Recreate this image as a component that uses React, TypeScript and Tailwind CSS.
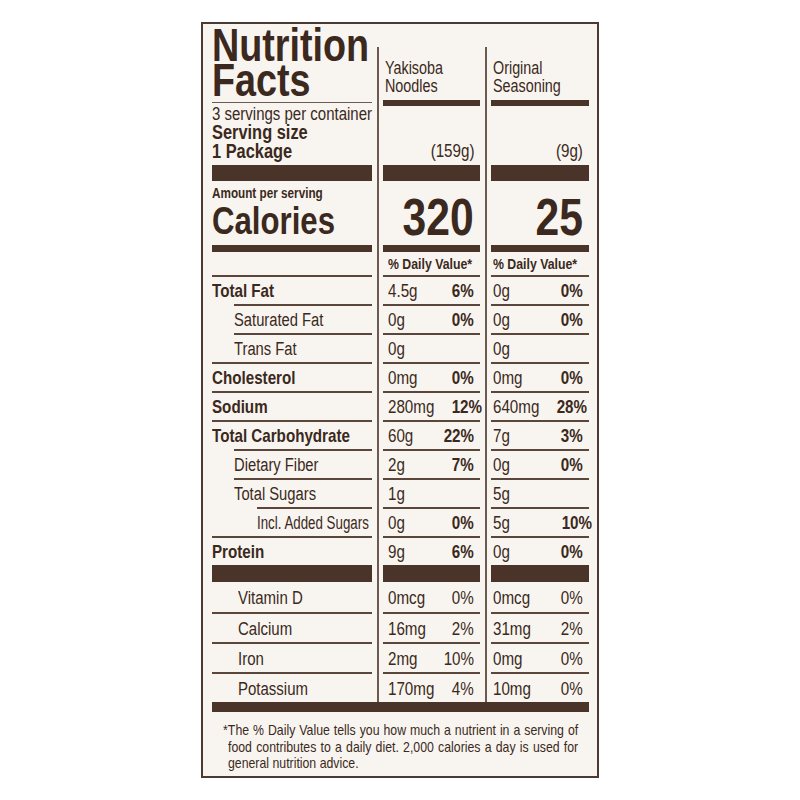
import React from "react";

type Row = {
  label: string;
  bold?: boolean;
  indent: string;
  a: [string, string];
  b: [string, string];
  ashift?: string;
  bshift?: string;
};

const rows: Row[] = [
  { label: "Total Fat", bold: true, indent: "ml-0", a: ["4.5g", "6%"], b: ["0g", "0%"] },
  { label: "Saturated Fat", indent: "ml-[22px]", a: ["0g", "0%"], b: ["0g", "0%"] },
  { label: "Trans Fat", indent: "ml-[22px]", a: ["0g", ""], b: ["0g", ""] },
  { label: "Cholesterol", bold: true, indent: "ml-0", a: ["0mg", "0%"], b: ["0mg", "0%"] },
  { label: "Sodium", bold: true, indent: "ml-0", a: ["280mg", "12%"], b: ["640mg", "28%"], ashift: "mr-[-7px]" },
  { label: "Total Carbohydrate", bold: true, indent: "ml-0", a: ["60g", "22%"], b: ["7g", "3%"] },
  { label: "Dietary Fiber", indent: "ml-[22px]", a: ["2g", "7%"], b: ["0g", "0%"] },
  { label: "Total Sugars", indent: "ml-[22px]", a: ["1g", ""], b: ["5g", ""] },
  { label: "Incl. Added Sugars", indent: "ml-[45px]", a: ["0g", "0%"], b: ["5g", "10%"], bshift: "mr-[-9px]" },
  { label: "Protein", bold: true, indent: "ml-0", a: ["9g", "6%"], b: ["0g", "0%"] },
];

const vit = [
  { label: "Vitamin D", a: ["0mcg", "0%"], b: ["0mcg", "0%"] },
  { label: "Calcium", a: ["16mg", "2%"], b: ["31mg", "2%"] },
  { label: "Iron", a: ["2mg", "10%"], b: ["0mg", "0%"] },
  { label: "Potassium", a: ["170mg", "4%"], b: ["10mg", "0%"] },
];

function L({
  children,
  className = "",
  sx = "scale-x-[0.82]",
}: {
  children: React.ReactNode;
  className?: string;
  sx?: string;
}) {
  return <span className={`inline-block whitespace-nowrap origin-left ${sx} ${className}`}>{children}</span>;
}
function R({ children, className = "" }: { children: React.ReactNode; className?: string }) {
  return <span className={`inline-block whitespace-nowrap origin-right scale-x-[0.82] ${className}`}>{children}</span>;
}

function Bar({ h }: { h: string }) {
  return <div className={`${h} w-full bg-[#4a3329]`} />;
}

function ValueCol({
  head,
  weight,
  cal,
  second,
  pad,
}: {
  head: [string, string];
  weight: string;
  cal: string;
  second: boolean;
  pad: string;
}) {
  return (
    <div className="flex flex-col w-full">
      <div className="h-[53px] pt-[12px] pl-[2px] text-[17.5px] leading-[18px]">
        <div><L>{head[0]}</L></div>
        <div><L>{head[1]}</L></div>
      </div>
      <Bar h="h-[6px]" />
      <div className="h-[59px] flex items-end justify-end pr-[6px] pb-[4px] text-[18.5px] leading-[20px]">
        <R>{weight}</R>
      </div>
      <Bar h="h-[16px]" />
      <div className="h-[64px] pt-[10px] pr-[6px] flex justify-end text-[52px] leading-[52px] font-bold">
        <R>{cal}</R>
      </div>
      <Bar h="h-[7px]" />
      <div className={`h-[23px] text-[15px] leading-[23px] font-bold ${pad}`}>
        <L>% Daily Value*</L>
      </div>
      {rows.map((r, i) => {
        const [v, p] = second ? r.b : r.a;
        const shift = second ? r.bshift ?? "" : r.ashift ?? "";
        return (
          <div key={i} className={`h-[29px] border-t-2 border-[#5a463b] flex items-center justify-between pt-[1px] pr-[6px] text-[18.5px] ${pad}`}>
            <L>{v}</L>
            <R className={`font-bold ${shift}`}>{p}</R>
          </div>
        );
      })}
      <Bar h="h-[17px]" />
      {vit.map((v, i) => {
        const [a, b] = second ? v.b : v.a;
        return (
          <div key={i} className={`h-[30px] ${i === 0 ? "" : "border-t-2 border-[#5a463b]"} flex items-center justify-between pt-[1px] pr-[6px] text-[18.5px] ${pad}`}>
            <L>{a}</L>
            <R>{b}</R>
          </div>
        );
      })}
    </div>
  );
}

export default function App() {
  return (
    <div className="min-h-screen bg-white pt-[22px]">
      <div className="mx-auto w-[398px] h-[756px] border-2 border-[#4a3a32] bg-[#f8f5f0] pl-[9px] pr-[8px] text-[#3b2920] [font-family:'Liberation_Sans',Arial,sans-serif]">
        <div className="flex items-start">
          {/* Left column */}
          <div className="w-[160px] flex flex-col">
            <div className="h-[79px] border-b-[1px] border-[#6a5a50] pt-[4px] text-[46px] leading-[35px] font-bold">
              <div><L>Nutrition</L></div>
              <div><L>Facts</L></div>
            </div>
            <div className="h-[62px] pt-[1px] leading-[19px]">
              <div className="text-[18.3px]"><L>3 servings per container</L></div>
              <div className="font-bold text-[20px]"><L>Serving size</L></div>
              <div className="font-bold text-[20px]"><L>1 Package</L></div>
            </div>
            <Bar h="h-[16px]" />
            <div className="h-[64px]">
              <div className="pt-[2px] text-[14.3px] leading-[20px] font-bold"><L>Amount per serving</L></div>
              <div className="text-[38px] leading-[36px] font-bold"><L>Calories</L></div>
            </div>
            <Bar h="h-[7px]" />
            <div className="h-[23px]" />
            {rows.map((r, i) => (
              <div key={i} className={`h-[29px] border-t-2 border-[#5a463b] flex items-center pt-[1px] ${r.indent} ${r.bold ? "font-bold text-[18.5px]" : "text-[18px]"}`}>
                <L sx={r.label === "Incl. Added Sugars" ? "scale-x-[0.74]" : "scale-x-[0.82]"}>{r.label}</L>
              </div>
            ))}
            <Bar h="h-[17px]" />
            {vit.map((v, i) => (
              <div key={i} className={`h-[30px] ${i === 0 ? "" : "border-t-2 border-[#5a463b]"} flex items-center pt-[1px] pl-[26px] text-[18.3px]`}>
                <L>{v.label}</L>
              </div>
            ))}
          </div>
          {/* Column 2 */}
          <div className="ml-[5px] mt-[23px] border-l-2 border-[#6b5a50] pl-[4px] w-[103px]">
            <ValueCol head={["Yakisoba", "Noodles"]} weight="(159g)" cal="320" second={false} pad="pl-[5px]" />
          </div>
          {/* Column 3 */}
          <div className="ml-[5px] mt-[23px] border-l-2 border-[#6b5a50] pl-[4px] w-[104px]">
            <ValueCol head={["Original", "Seasoning"]} weight="(9g)" cal="25" second={true} pad="pl-[2px]" />
          </div>
        </div>
        <div className="h-[10px] bg-[#4a3329]" />
        <div className="h-[64px] pt-[10px] pl-[16px] text-[15px] leading-[16.5px]">
          <div className="w-[427px] origin-left scale-x-[0.82] whitespace-nowrap text-justify [text-align-last:justify] -indent-[6px]">
            *The % Daily Value tells you how much a nutrient in a serving of
          </div>
          <div className="w-[427px] origin-left scale-x-[0.82] whitespace-nowrap text-justify [text-align-last:justify]">
            food contributes to a daily diet. 2,000 calories a day is used for
          </div>
          <div className="w-[427px] origin-left scale-x-[0.82] whitespace-nowrap">general nutrition advice.</div>
        </div>
      </div>
    </div>
  );
}
